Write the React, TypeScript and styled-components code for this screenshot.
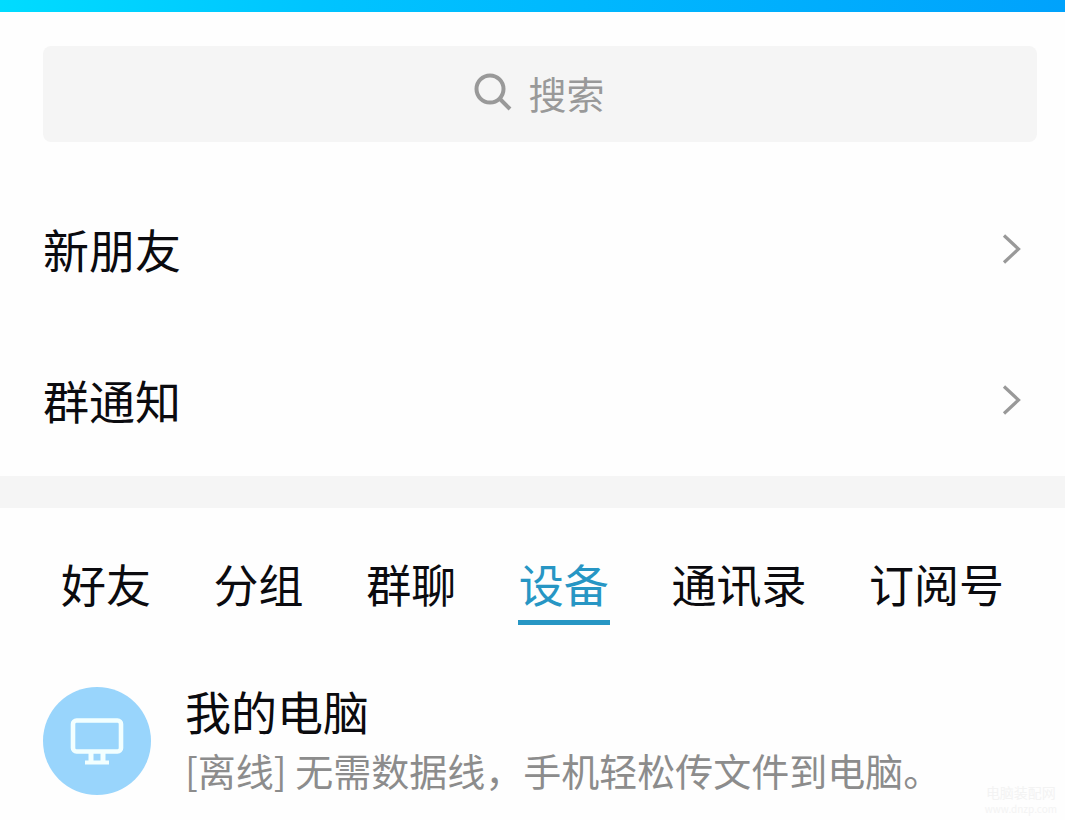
import React, { useState } from "react";
import styled, { createGlobalStyle } from "styled-components";

const GlobalStyle = createGlobalStyle`
  * { box-sizing: border-box; }
  body {
    margin: 0;
    background: #fefefe;
    color: #0b0b0f;
    font-family: "Noto Sans CJK SC", sans-serif;
  }
  button, input { font: inherit; color: inherit; }
`;

const Page = styled.div`
  position: relative;
  min-height: 100vh;
`;

const TopBar = styled.header`
  height: 12px;
  background: linear-gradient(90deg, #00dcff 0%, #00c4ff 30%, #00a2fc 100%);
`;

const SearchBox = styled.label`
  display: flex;
  align-items: center;
  justify-content: center;
  gap: 17px;
  height: 96px;
  margin: 34px 28px 32px 43px;
  padding-bottom: 4px;
  border-radius: 8px;
  background: #f5f5f5;
  color: #999999;
`;

const SearchInput = styled.input`
  width: 78px;
  height: 56px;
  padding: 0;
  border: 0;
  outline: 0;
  background: transparent;
  font-size: 38px;
  &::placeholder { color: #999999; opacity: 1; }
`;

const EntryList = styled.nav`
  display: flex;
  flex-direction: column;
`;

const Entry = styled.a`
  display: flex;
  align-items: center;
  justify-content: space-between;
  height: 151px;
  padding: 0 43px 2px;
  color: inherit;
  text-decoration: none;
`;

const EntryName = styled.span`
  padding-bottom: 2px;
  font-size: 46px;
  line-height: 56px;
`;

const Divider = styled.div`
  height: 32px;
  background: #f5f5f5;
`;

const Tabs = styled.div`
  display: flex;
  justify-content: space-between;
  padding: 48px 60px 0;
`;

const Tab = styled.button<{ $active: boolean }>`
  padding: 0 1px 8px;
  border: 0;
  border-bottom: 5px solid ${(p) => (p.$active ? "#2796c4" : "transparent")};
  background: none;
  color: ${(p) => (p.$active ? "#2796c4" : "inherit")};
  font-size: 45px;
  line-height: 56px;
  white-space: nowrap;
  cursor: pointer;
`;

const Device = styled.a`
  display: flex;
  align-items: center;
  gap: 34px;
  padding: 55px 43px 20px;
  color: inherit;
  text-decoration: none;
`;

const Avatar = styled.span`
  flex: none;
  display: grid;
  place-items: center;
  width: 108px;
  height: 108px;
  border-radius: 50%;
  background: #99d5fc;
`;

const DeviceText = styled.span`
  display: flex;
  flex-direction: column;
  padding-bottom: 2px;
`;

const DeviceName = styled.span`
  font-size: 46px;
  line-height: 60px;
`;

const DeviceNote = styled.span`
  color: #8c8c8c;
  font-size: 38px;
  line-height: 60px;
`;

const Watermark = styled.div`
  position: absolute;
  right: 8px;
  bottom: 6px;
  color: #f3f3f3;
  font-size: 14px;
  line-height: 20px;
  text-align: center;
`;

const WatermarkUrl = styled.div`
  font-size: 10px;
  line-height: 14px;
`;

const SearchIcon = () => (
  <svg width="38" height="38" viewBox="0 0 38 38" fill="none" stroke="#999999" strokeWidth="4" aria-hidden="true">
    <circle cx="16" cy="16" r="13.5" />
    <path d="M25.5 25.5 36 36" />
  </svg>
);

const Chevron = () => (
  <svg width="20" height="32" viewBox="0 0 20 32" fill="none" stroke="#999999" strokeWidth="3.2" aria-hidden="true">
    <path d="M2 2.5 16.5 16 2 29.5" />
  </svg>
);

const Monitor = () => (
  <svg width="54" height="48" viewBox="0 0 54 48" fill="none" stroke="#f2ffff" aria-hidden="true">
    <rect x="3" y="3.5" width="48" height="31" rx="3.5" strokeWidth="4.6" />
    <path d="M21 36v9M33 36v9" strokeWidth="5" />
    <path d="M15 45.5h24" strokeWidth="4" />
  </svg>
);

const entries = ["新朋友", "群通知"];
const tabs = ["好友", "分组", "群聊", "设备", "通讯录", "订阅号"];

export default function App() {
  const [active, setActive] = useState("设备");
  return (
    <Page>
      <GlobalStyle />
      <TopBar />
      <SearchBox>
        <SearchIcon />
        <SearchInput type="text" placeholder="搜索" aria-label="搜索" />
      </SearchBox>
      <EntryList>
        {entries.map((name) => (
          <Entry href="#" key={name}>
            <EntryName>{name}</EntryName>
            <Chevron />
          </Entry>
        ))}
      </EntryList>
      <Divider />
      <Tabs role="tablist">
        {tabs.map((name) => (
          <Tab
            key={name}
            type="button"
            role="tab"
            aria-selected={name === active}
            $active={name === active}
            onClick={() => setActive(name)}
          >
            {name}
          </Tab>
        ))}
      </Tabs>
      <Device href="#">
        <Avatar>
          <Monitor />
        </Avatar>
        <DeviceText>
          <DeviceName>我的电脑</DeviceName>
          <DeviceNote>[离线] 无需数据线，手机轻松传文件到电脑。</DeviceNote>
        </DeviceText>
      </Device>
      <Watermark>
        电脑装配网
        <WatermarkUrl>www.dnzp.com</WatermarkUrl>
      </Watermark>
    </Page>
  );
}
